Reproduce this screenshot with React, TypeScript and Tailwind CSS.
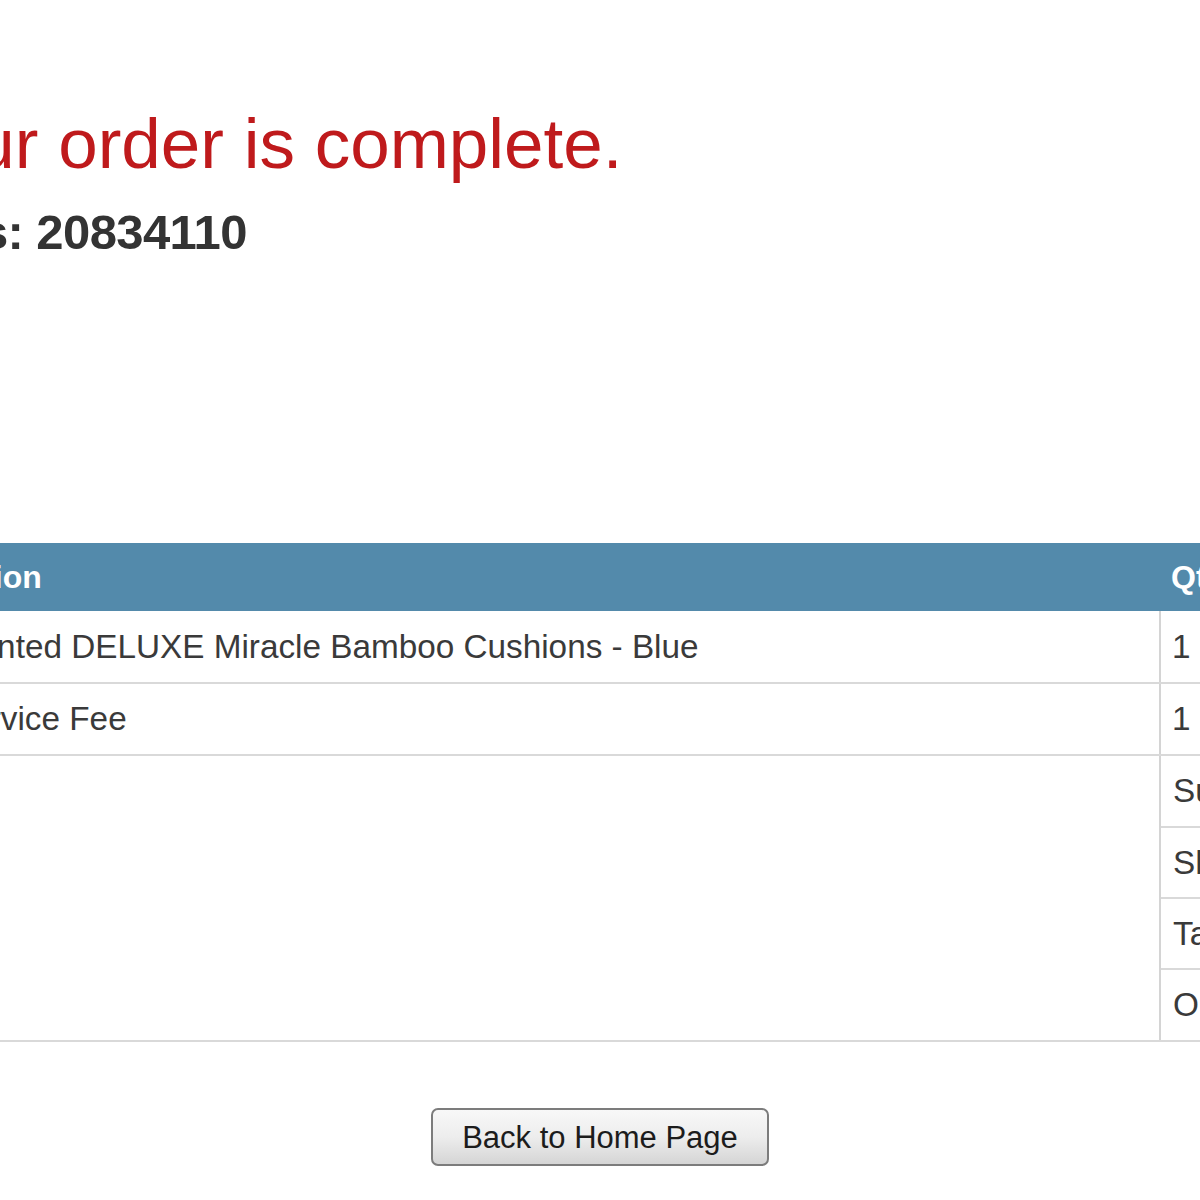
import React from "react";

export default function App() {
  const rowText = "text-[33.3px] leading-none text-[#3a3a3a]";
  return (
    <div className="w-full h-[1200px] overflow-hidden bg-white font-['Liberation_Sans',Arial,sans-serif]">
      <h1 className="pt-[108px] -ml-[105px] whitespace-nowrap text-[71px] leading-none font-normal text-[#bf1a1c]">
        Your order is complete.
      </h1>
      <p className="mt-[29px] -ml-[475px] whitespace-nowrap text-[49px] leading-none font-bold tracking-[-0.6px] text-[#333333]">
        Your order number is: 20834110
      </p>

      <div className="mt-[286px] -ml-[230px] w-[1700px]">
        {/* header */}
        <div className="flex h-[68px] bg-[#538aab] text-white text-[32px] font-bold">
          <div className="w-[1391px] flex items-center pl-[21px] whitespace-nowrap">Item Description</div>
          <div className="flex-1 flex items-center pl-[10px]">Qty</div>
        </div>
        {/* row 1 */}
        <div className="flex h-[73px] border-b-2 border-[#d9d9d9]">
          <div className={`w-[1391px] flex items-center pl-[179px] whitespace-nowrap border-r-2 border-[#d4d4d4] ${rowText}`}>
            Painted DELUXE Miracle Bamboo Cushions - Blue
          </div>
          <div className={`flex-1 flex items-center pl-[11px] ${rowText}`}>1</div>
        </div>
        {/* row 2 */}
        <div className="flex h-[72px] border-b-2 border-[#d9d9d9]">
          <div className={`w-[1391px] flex items-center pl-[179px] whitespace-nowrap border-r-2 border-[#d4d4d4] ${rowText}`}>
            Service Fee
          </div>
          <div className={`flex-1 flex items-center pl-[11px] ${rowText}`}>1</div>
        </div>
        {/* totals */}
        <div className="flex border-b-2 border-[#d9d9d9]">
          <div className="w-[1391px] border-r-2 border-[#d4d4d4]"></div>
          <div className="flex-1 flex flex-col">
            <div className={`h-[72px] flex items-center pl-[12px] border-b-2 border-[#d9d9d9] ${rowText}`}>Subtotal</div>
            <div className={`h-[71px] flex items-center pl-[12px] border-b-2 border-[#d9d9d9] ${rowText}`}>Shipping</div>
            <div className={`h-[71px] flex items-center pl-[12px] border-b-2 border-[#d9d9d9] ${rowText}`}>Tax</div>
            <div className={`h-[70px] flex items-center pl-[12px] ${rowText}`}>Order Total</div>
          </div>
        </div>
      </div>

      <div className="mt-[66px] flex justify-center">
        <button className="w-[338px] h-[58px] rounded-[7px] border-2 border-[#7c7c7c] bg-gradient-to-b from-[#f8f8f8] via-[#ededed] to-[#d5d5d5] text-[31px] leading-none text-[#1c1c1c] font-['Liberation_Sans',Arial,sans-serif]">
          Back to Home Page
        </button>
      </div>
    </div>
  );
}
